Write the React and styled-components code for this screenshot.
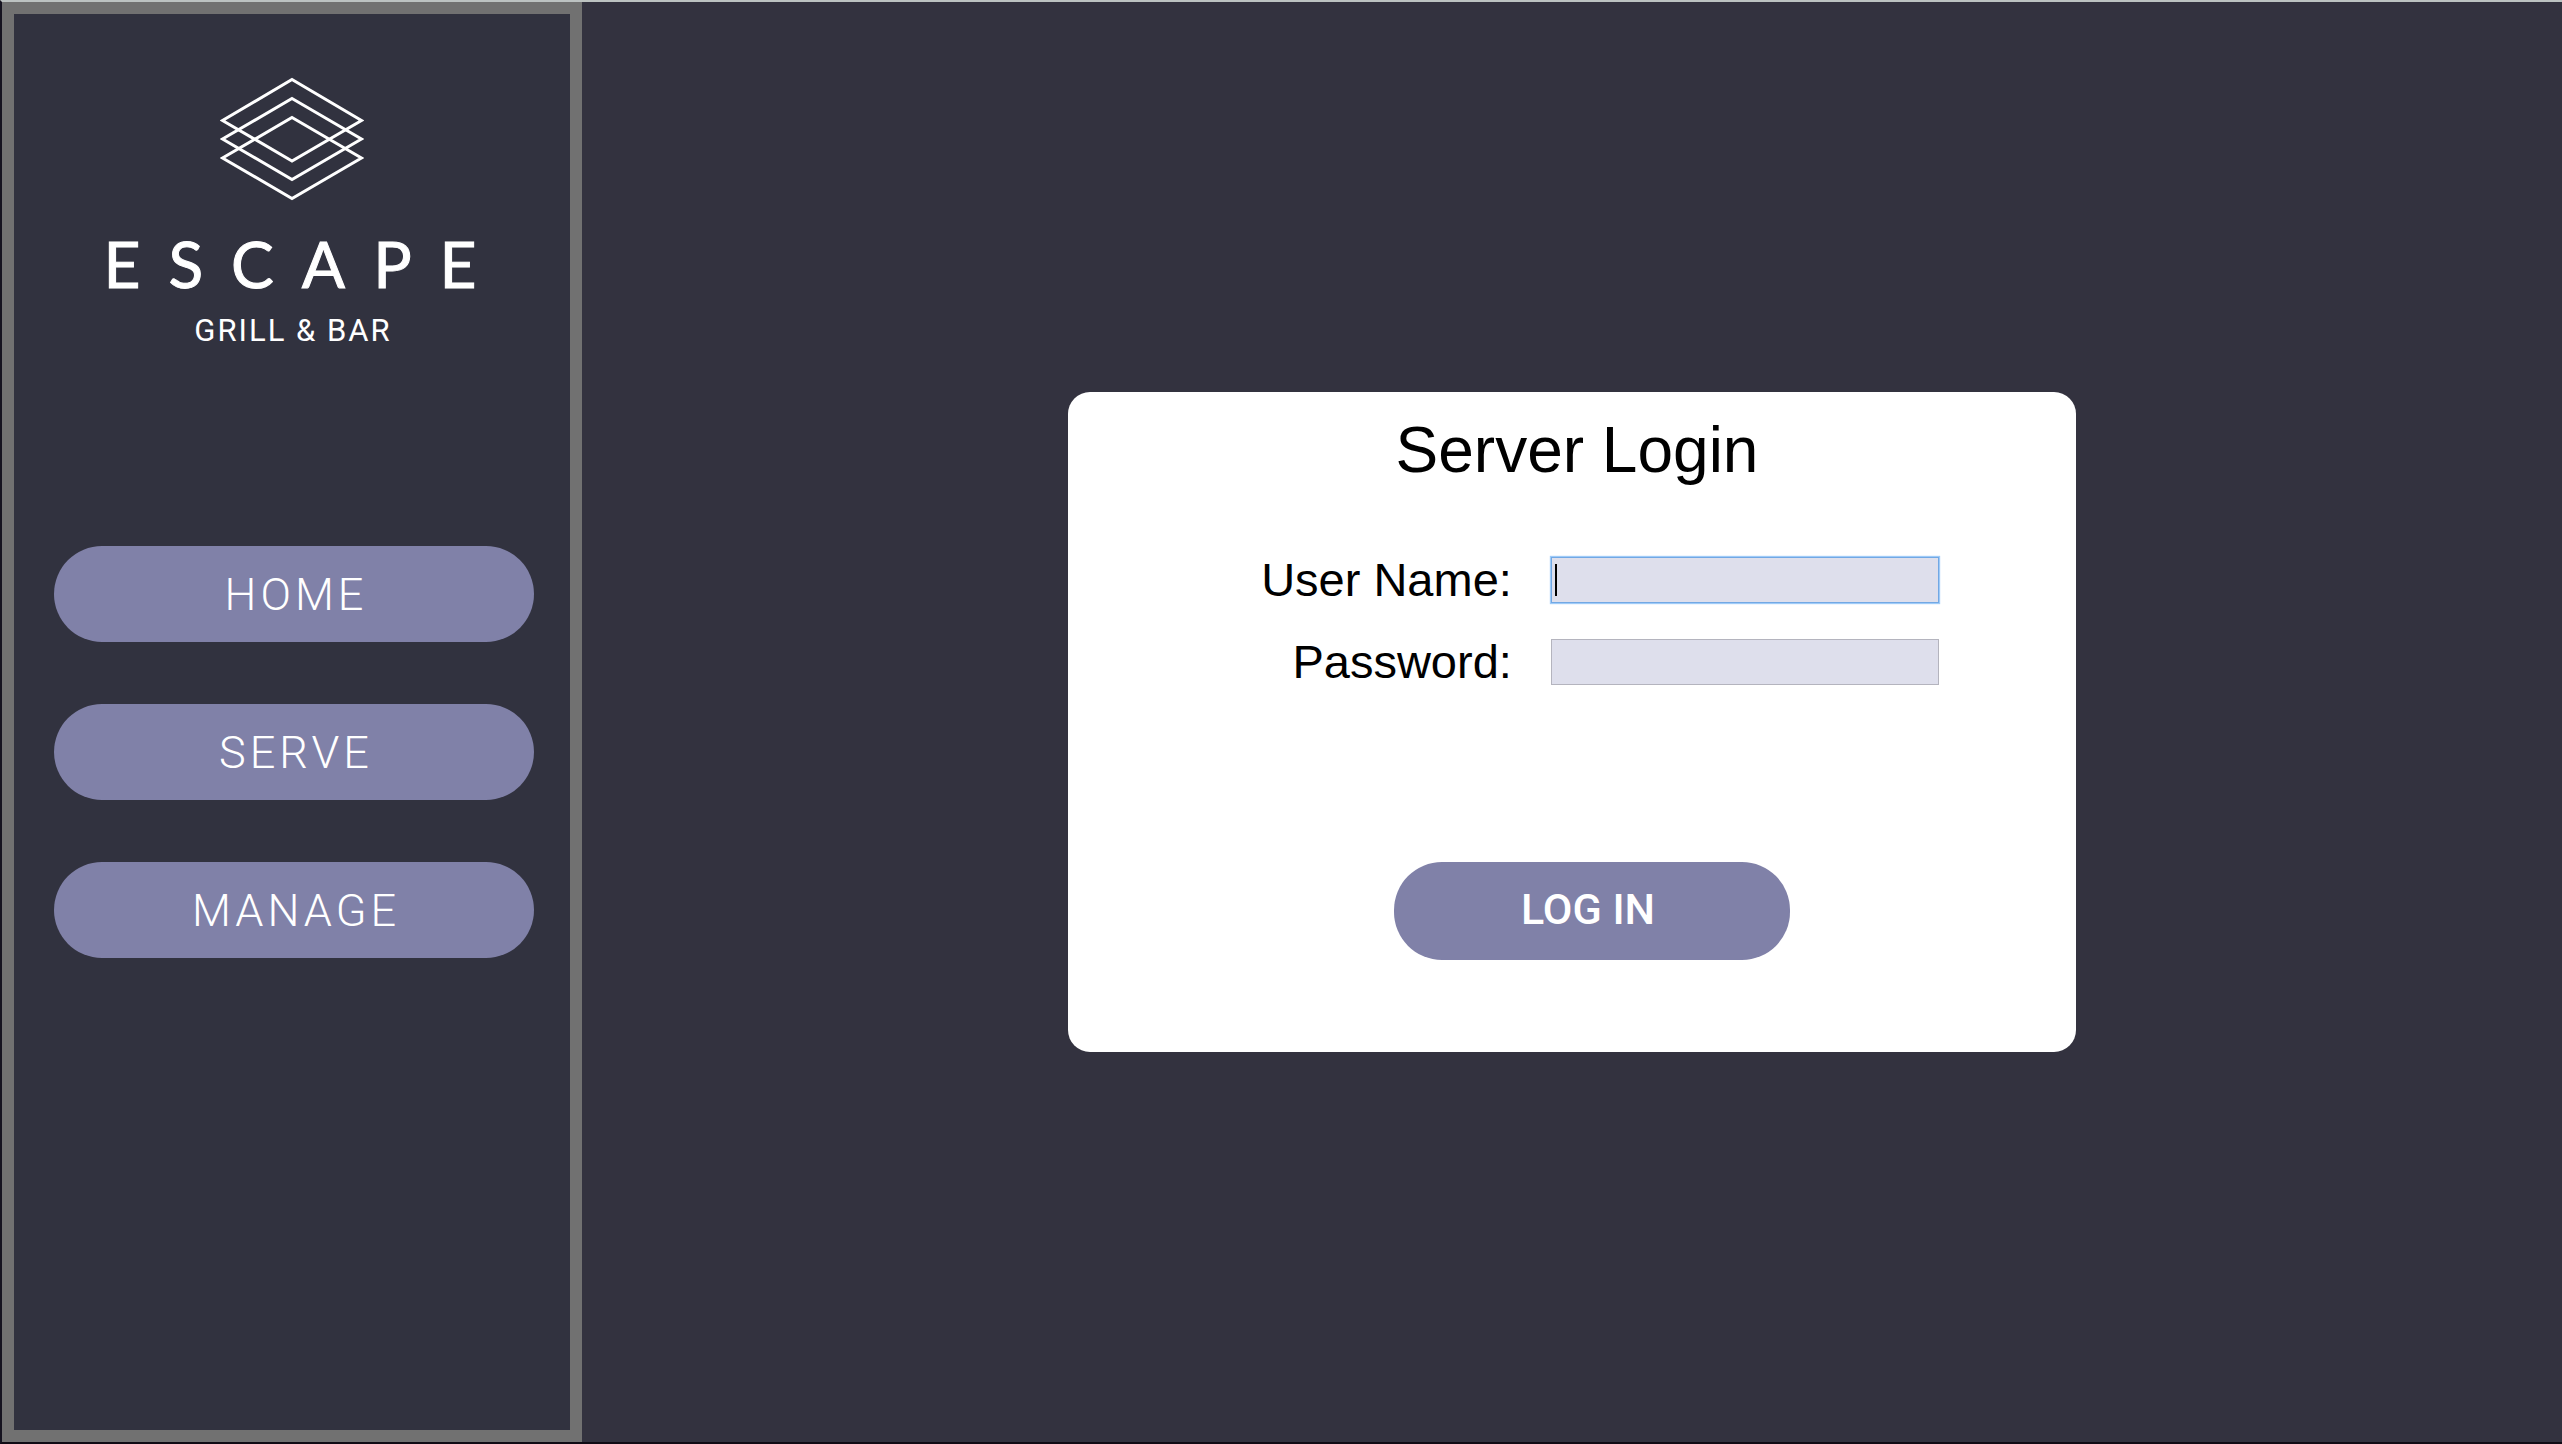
import React from "react";
import styled, { createGlobalStyle } from "styled-components";

const GlobalStyle = createGlobalStyle`
  *, *::before, *::after { box-sizing: border-box; }
  body {
    margin: 0;
    background: #33323f;
    font-family: "Liberation Sans", Arial, sans-serif;
  }
`;

const Page = styled.div`
  display: flex;
  min-height: 100vh;
  border-top: 2px solid #bcc2c1;
  border-left: 2px solid #151320;
  border-bottom: 2px solid #100b15;
`;

const Sidebar = styled.aside`
  flex: 0 0 580px;
  padding: 63px 0;
  border: 12px solid #717171;
  background: #31323f;
`;

const Brand = styled.div`
  display: flex;
  flex-direction: column;
  align-items: center;
  color: #fff;
`;

const BrandName = styled.div`
  margin-top: 31px;
  padding-left: 24px;
  font: 400 64px/64px Lato, sans-serif;
  letter-spacing: 28px;
  -webkit-text-stroke: 1px #fff;
`;

const BrandTag = styled.div`
  margin-top: 17px;
  padding-left: 2px;
  font: 400 31px/36px Roboto, sans-serif;
  letter-spacing: 2px;
`;

const Nav = styled.nav`
  display: flex;
  flex-direction: column;
  gap: 62px;
  margin-top: 197px;
  padding: 0 36px 0 40px;
`;

const PillButton = styled.button`
  border: 0;
  border-radius: 48px;
  background: #8081a8;
  color: #fff;
  font-family: Roboto, sans-serif;
  cursor: pointer;
`;

const NavButton = styled(PillButton)`
  padding: 23px 24px 21px 28px;
  font-size: 45px;
  font-weight: 300;
  line-height: 52px;
  letter-spacing: 4px;
`;

const LoginButton = styled(PillButton)`
  align-self: center;
  width: 396px;
  margin: 176px 0 0 40px;
  padding: 21px 32px 25px 24px;
  font-size: 43px;
  font-weight: 500;
  line-height: 52px;
`;

const Main = styled.main`
  flex: 1;
  display: flex;
  align-items: center;
  justify-content: center;
`;

const Card = styled.form`
  display: flex;
  flex-direction: column;
  width: 1008px;
  padding: 22px 0 92px;
  border-radius: 22px;
  background: #fff;
  color: #000;
`;

const Title = styled.h1`
  margin: 0;
  padding-left: 10px;
  font-size: 64px;
  font-weight: 400;
  line-height: 72px;
  text-align: center;
`;

const Fields = styled.div`
  display: grid;
  grid-template-columns: auto 388px;
  justify-content: center;
  align-items: center;
  gap: 34px 39px;
  margin-top: 70px;
  padding-left: 56px;
`;

const Label = styled.label`
  font-size: 47px;
  line-height: 48px;
  text-align: right;
`;

const Input = styled.input`
  width: 100%;
  min-width: 0;
  height: 46px;
  padding: 6px 4px;
  border: 1px solid #b4b4be;
  border-radius: 0;
  outline: none;
  background: #dedfec;
  color: #000;
  font: 28px/32px "Liberation Sans", Arial, sans-serif;

  &:focus {
    border-color: #72a8e4;
    box-shadow: 0 0 1px 1px #9fcbf8;
  }

  /* Steady caret while the focused field is empty */
  &:focus:placeholder-shown {
    background: linear-gradient(#000, #000) 3px center / 2px 32px no-repeat #dedfec;
    caret-color: transparent;
  }
`;

function BrandMark() {
  return (
    <svg width="144" height="124" viewBox="0 0 144 124" fill="none" stroke="#fff" strokeWidth="3" aria-hidden="true">
      <path d="M72 2.5 L141.5 43.5 L72 84 L2.5 43.5 Z" />
      <path d="M72 21.5 L141.5 62 L72 102.5 L2.5 62 Z" />
      <path d="M72 40.5 L141.5 81 L72 121.5 L2.5 81 Z" />
    </svg>
  );
}

export default function App() {
  return (
    <>
      <GlobalStyle />
      <Page>
        <Sidebar>
          <Brand>
            <BrandMark />
            <BrandName>ESCAPE</BrandName>
            <BrandTag>GRILL &amp; BAR</BrandTag>
          </Brand>
          <Nav>
            {["HOME", "SERVE", "MANAGE"].map((name) => (
              <NavButton key={name} type="button">{name}</NavButton>
            ))}
          </Nav>
        </Sidebar>
        <Main>
          <Card onSubmit={(event) => event.preventDefault()}>
            <Title>Server Login</Title>
            <Fields>
              <Label htmlFor="username">User Name:</Label>
              <Input id="username" type="text" placeholder=" " autoFocus />
              <Label htmlFor="password">Password:</Label>
              <Input id="password" type="password" placeholder=" " />
            </Fields>
            <LoginButton type="submit">LOG IN</LoginButton>
          </Card>
        </Main>
      </Page>
    </>
  );
}
